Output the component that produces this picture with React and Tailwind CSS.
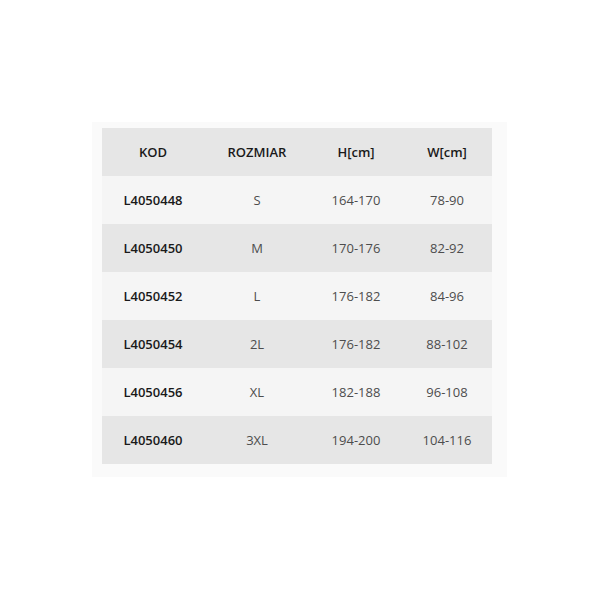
const rows = [
  ['L4050448', 'S', '164-170', '78-90'],
  ['L4050450', 'M', '170-176', '82-92'],
  ['L4050452', 'L', '176-182', '84-96'],
  ['L4050454', '2L', '176-182', '88-102'],
  ['L4050456', 'XL', '182-188', '96-108'],
  ['L4050460', '3XL', '194-200', '104-116'],
];

export default function App() {
  return (
    <div className="w-[600px] h-[600px] bg-white pt-[122px] pl-[92px] font-['Open_Sans',sans-serif] text-[13px]">
      <div className="w-[415px] bg-[#fafafa] pt-[6px] pl-[10px] pr-[15px] pb-[13px]">
        <table className="w-[390px] border-collapse table-fixed">
          <colgroup>
            <col className="w-[102px]" />
            <col className="w-[106px]" />
            <col className="w-[92px]" />
            <col className="w-[90px]" />
          </colgroup>
          <thead>
            <tr className="h-[48px] bg-[#e6e6e6] text-[#1a1a1a]">
              <th className="pt-[2px] font-semibold text-center">KOD</th>
              <th className="pt-[2px] font-semibold text-center">ROZMIAR</th>
              <th className="pt-[2px] font-semibold text-center">H[cm]</th>
              <th className="pt-[2px] font-semibold text-center">W[cm]</th>
            </tr>
          </thead>
          <tbody>
            {rows.map((r, i) => (
              <tr key={r[0]} className={`h-[48px] ${i % 2 === 0 ? 'bg-[#f5f5f5]' : 'bg-[#e6e6e6]'}`}>
                <td className="pt-[2px] text-center font-semibold text-[#1a1a1a]">{r[0]}</td>
                <td className="pt-[2px] text-center font-medium text-[#4d4d4d]">{r[1]}</td>
                <td className="pt-[2px] text-center font-medium text-[#4d4d4d]">{r[2]}</td>
                <td className="pt-[2px] text-center font-medium text-[#4d4d4d]">{r[3]}</td>
              </tr>
            ))}
          </tbody>
        </table>
      </div>
    </div>
  );
}
